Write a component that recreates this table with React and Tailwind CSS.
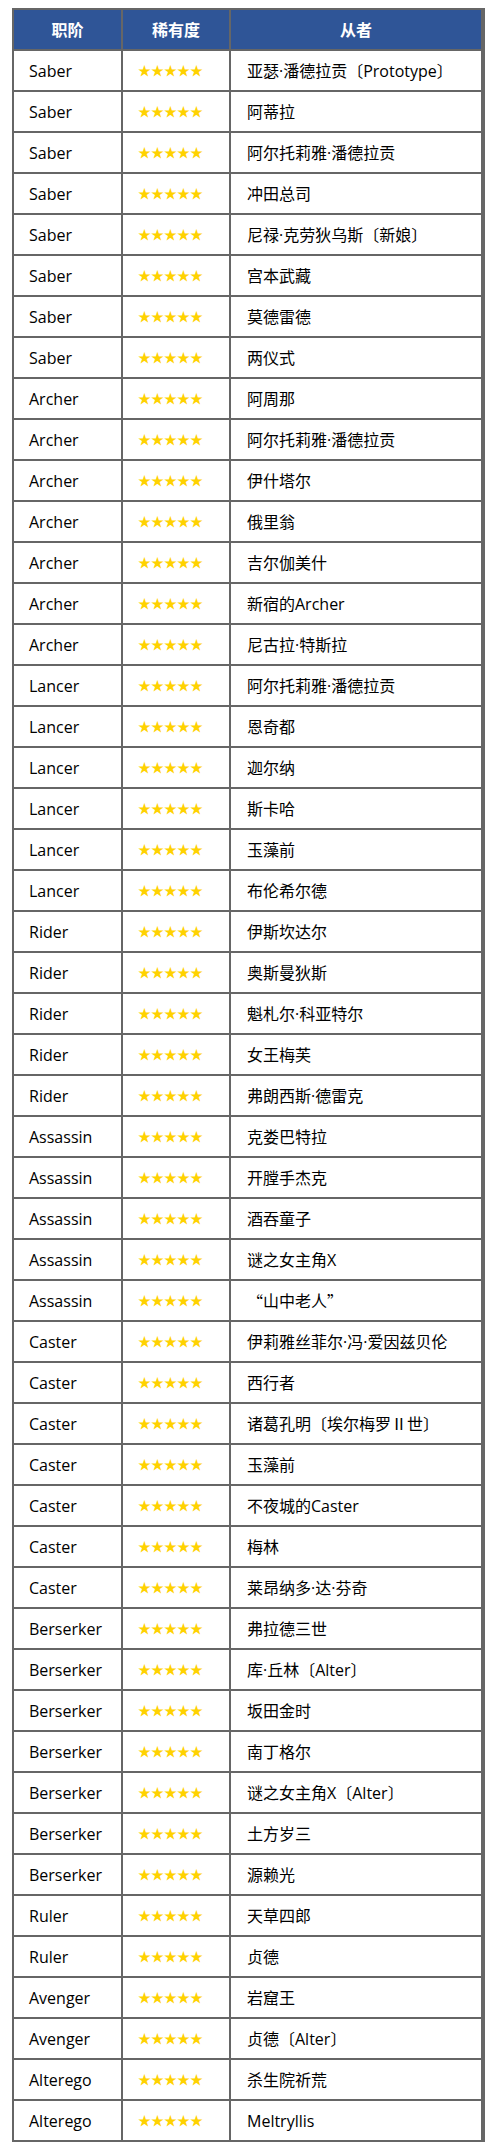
import React from 'react';

const rows = [
  ['Saber', '亚瑟·潘德拉贡〔Prototype〕'],
  ['Saber', '阿蒂拉'],
  ['Saber', '阿尔托莉雅·潘德拉贡'],
  ['Saber', '冲田总司'],
  ['Saber', '尼禄·克劳狄乌斯〔新娘〕'],
  ['Saber', '宫本武藏'],
  ['Saber', '莫德雷德'],
  ['Saber', '两仪式'],
  ['Archer', '阿周那'],
  ['Archer', '阿尔托莉雅·潘德拉贡'],
  ['Archer', '伊什塔尔'],
  ['Archer', '俄里翁'],
  ['Archer', '吉尔伽美什'],
  ['Archer', '新宿的Archer'],
  ['Archer', '尼古拉·特斯拉'],
  ['Lancer', '阿尔托莉雅·潘德拉贡'],
  ['Lancer', '恩奇都'],
  ['Lancer', '迦尔纳'],
  ['Lancer', '斯卡哈'],
  ['Lancer', '玉藻前'],
  ['Lancer', '布伦希尔德'],
  ['Rider', '伊斯坎达尔'],
  ['Rider', '奥斯曼狄斯'],
  ['Rider', '魁札尔·科亚特尔'],
  ['Rider', '女王梅芙'],
  ['Rider', '弗朗西斯·德雷克'],
  ['Assassin', '克娄巴特拉'],
  ['Assassin', '开膛手杰克'],
  ['Assassin', '酒吞童子'],
  ['Assassin', '谜之女主角X'],
  ['Assassin', '“山中老人”'],
  ['Caster', '伊莉雅丝菲尔·冯·爱因兹贝伦'],
  ['Caster', '西行者'],
  ['Caster', '诸葛孔明〔埃尔梅罗Ⅱ世〕'],
  ['Caster', '玉藻前'],
  ['Caster', '不夜城的Caster'],
  ['Caster', '梅林'],
  ['Caster', '莱昂纳多·达·芬奇'],
  ['Berserker', '弗拉德三世'],
  ['Berserker', '库·丘林〔Alter〕'],
  ['Berserker', '坂田金时'],
  ['Berserker', '南丁格尔'],
  ['Berserker', '谜之女主角X〔Alter〕'],
  ['Berserker', '土方岁三'],
  ['Berserker', '源赖光'],
  ['Ruler', '天草四郎'],
  ['Ruler', '贞德'],
  ['Avenger', '岩窟王'],
  ['Avenger', '贞德〔Alter〕'],
  ['Alterego', '杀生院祈荒'],
  ['Alterego', 'Meltryllis'],
];

const font = { fontFamily: '"Open Sans", "Noto Sans CJK SC", sans-serif' };

// full-width quotes come from the CJK face, like the original
const Name = ({ text }) =>
  text.split(/([“”])/).map((part, i) =>
    part === '“' || part === '”' ? (
      <span key={i} style={{ fontFamily: '"Noto Sans CJK SC", sans-serif' }}>{part}</span>
    ) : (
      part
    )
  );

export default function App() {
  return (
    <div className="bg-white w-[498px] h-[2151px] pt-[8px] pl-[12px]" style={font}>
      <div className="w-[473px] border-l-2 border-t-2 border-r-4 border-[#666666]">
        {/* header */}
        <div className="flex h-[41px] border-b-2 border-[#666666] bg-[#2f5597] text-white font-bold text-[16px]">
          <div className="w-[109px] border-r-2 border-[#666666] flex items-center justify-center">职阶</div>
          <div className="w-[108px] border-r-2 border-[#666666] flex items-center justify-center">稀有度</div>
          <div className="flex-1 flex items-center justify-center">从者</div>
        </div>
        {rows.map(([cls, name], i) => (
          <div key={i} className="flex h-[41px] border-b-2 border-[#666666] text-[16px] text-black">
            <div className="w-[109px] border-r-2 border-[#666666] flex items-center pl-[15px]">{cls}</div>
            <div className="w-[108px] border-r-2 border-[#666666] flex items-center pl-[15px] text-[13px] text-[#ffd200]">
              ★★★★★
            </div>
            <div className="flex-1 flex items-center pl-[16px] whitespace-nowrap">
              <Name text={name} />
            </div>
          </div>
        ))}
      </div>
    </div>
  );
}
